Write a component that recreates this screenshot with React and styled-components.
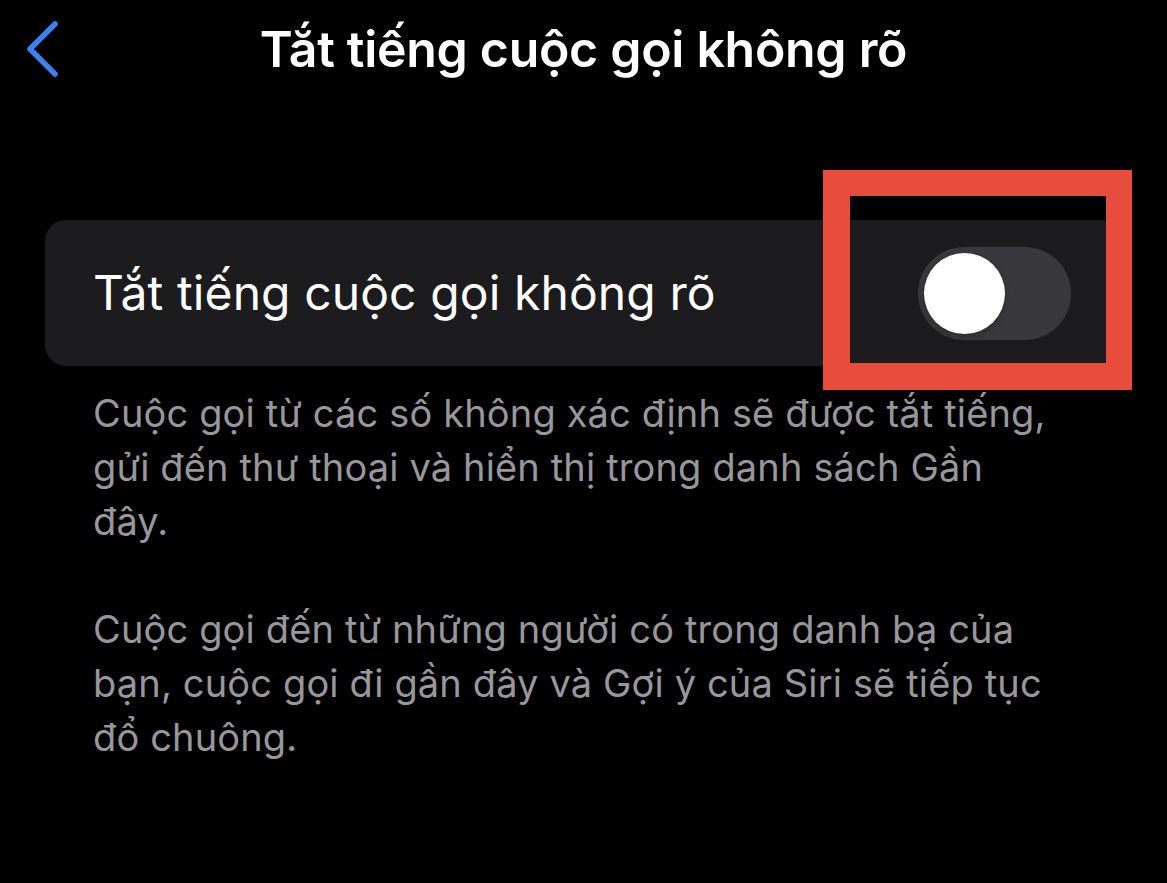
import React from "react";
import styled, { createGlobalStyle } from "styled-components";

const Global = createGlobalStyle`
  html, body { margin: 0; padding: 0; background: #000; }
  body { font-family: Inter, "Noto Sans", sans-serif; -webkit-font-smoothing: antialiased; }
`;

const Screen = styled.div`
  width: 1167px;
  min-height: 883px;
  background: #000;
  display: flex;
  flex-direction: column;
`;

const NavBar = styled.header`
  position: relative;
  height: 98px;
  display: flex;
  align-items: center;
  justify-content: center;
`;

const BackButton = styled.button`
  position: absolute;
  left: 22px;
  top: 18px;
  width: 40px;
  height: 62px;
  padding: 0;
  border: none;
  background: transparent;
  display: flex;
  align-items: center;
  justify-content: center;
`;

const Title = styled.h1`
  margin: 0;
  margin-top: -1px;
  font-family: Inter, "Noto Sans", sans-serif;
  font-size: 50px;
  font-weight: 600;
  letter-spacing: -0.3px;
  color: #fff;
`;

const Content = styled.main`
  padding: 122px 45px 0 45px;
  display: flex;
  flex-direction: column;
`;

const Card = styled.section`
  position: relative;
  height: 146px;
  border-radius: 21px;
  background: #1c1c1e;
  display: flex;
  align-items: center;
  justify-content: space-between;
  padding: 0 51px 0 48px;
`;

const Label = styled.span`
  font-size: 48px;
  font-weight: 400;
  letter-spacing: 0.1px;
  color: #fff;
  margin-top: -2px;
`;

const Toggle = styled.div`
  width: 153px;
  height: 93px;
  border-radius: 47px;
  background: ${(p) => (p.$on ? "#30d158" : "#39393d")};
  display: flex;
  align-items: center;
  justify-content: ${(p) => (p.$on ? "flex-end" : "flex-start")};
  padding: 0 6px;
  box-sizing: border-box;
`;

const Knob = styled.div`
  width: 81px;
  height: 81px;
  border-radius: 50%;
  background: #fff;
  box-shadow: 0 2px 6px rgba(0, 0, 0, 0.25);
`;

const Highlight = styled.div`
  position: absolute;
  left: 778px;
  top: -50px;
  width: 309px;
  height: 220px;
  box-sizing: border-box;
  border: 26px solid #e84c3d;
  border-bottom-width: 27px;
  border-left-width: 27px;
  pointer-events: none;
`;

const Footer = styled.div`
  padding: 20px 0 0 48px;
  display: flex;
  flex-direction: column;
  gap: 54px;
`;

const Paragraph = styled.p`
  margin: 0;
  font-size: 38px;
  line-height: 54px;
  letter-spacing: 0.15px;
  color: #97979c;
`;

const Line = styled.span`
  display: block;
  white-space: nowrap;
`;

export default function App() {
  return (
    <>
      <Global />
      <Screen>
        <NavBar>
          <BackButton aria-label="Quay lại">
            <svg width="40" height="62" viewBox="0 0 40 62" fill="none">
              <path
                d="M33 6 L8 31 L33 56"
                stroke="#3d80f0"
                strokeWidth="5.5"
                strokeLinecap="round"
                strokeLinejoin="round"
              />
            </svg>
          </BackButton>
          <Title>Tắt tiếng cuộc gọi không rõ</Title>
        </NavBar>
        <Content>
          <Card>
            <Label>Tắt tiếng cuộc gọi không rõ</Label>
            <Toggle $on={false}>
              <Knob />
            </Toggle>
            <Highlight />
          </Card>
          <Footer>
            <Paragraph>
              <Line>Cuộc gọi từ các số không xác định sẽ được tắt tiếng,</Line>
              <Line>gửi đến thư thoại và hiển thị trong danh sách Gần</Line>
              <Line>đây.</Line>
            </Paragraph>
            <Paragraph>
              <Line>Cuộc gọi đến từ những người có trong danh bạ của</Line>
              <Line>bạn, cuộc gọi đi gần đây và Gợi ý của Siri sẽ tiếp tục</Line>
              <Line>đổ chuông.</Line>
            </Paragraph>
          </Footer>
        </Content>
      </Screen>
    </>
  );
}
